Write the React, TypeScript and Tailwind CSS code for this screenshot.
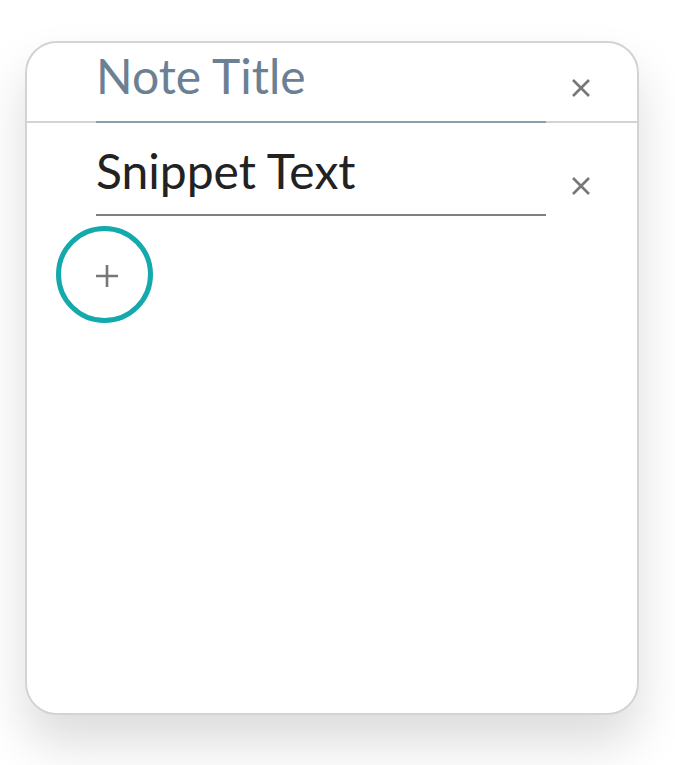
import { useState } from "react";

function CloseIcon() {
  return (
    <svg width="20" height="20" viewBox="0 0 20 20" className="text-[#777]">
      <path d="M2 2 L18 18 M18 2 L2 18" stroke="currentColor" strokeWidth="2.6" />
    </svg>
  );
}

export default function App() {
  const [title] = useState("");
  const [snippets] = useState(["Snippet Text"]);

  return (
    <div className="min-h-[765px] bg-white pl-[25px] pt-[41px] font-['Lato',sans-serif]">
      <div className="w-[614px] h-[674px] rounded-[32px] border-2 border-[#d3d3d3] bg-white shadow-[0_28px_50px_rgba(0,0,0,0.14)] overflow-hidden">
        <div className="flex items-end border-b-2 border-[#d3d3d3] h-[80px]">
          <div className="ml-[69px] w-[450px] h-[80px] border-b-2 border-[#8a9dab] -mb-[2px] flex items-end">
            <span className="text-[48px] leading-none text-[#6b8092] pb-[21px]">
              {title || "Note Title"}
            </span>
          </div>
          <div className="ml-[25px] pb-[23px]">
            <CloseIcon />
          </div>
        </div>

        {snippets.map((s) => (
          <div key={s} className="flex items-end h-[93px]">
            <div className="ml-[69px] w-[450px] h-[84px] border-b-2 border-[#808080] flex items-end">
              <span className="text-[48px] leading-none text-[#222] pb-[19px]">{s}</span>
            </div>
            <div className="ml-[25px] pb-[20px]">
              <CloseIcon />
            </div>
          </div>
        ))}

        <button className="ml-[29px] mt-[10px] w-[97px] h-[97px] rounded-full border-[5px] border-[#14a9ad] flex items-center justify-center">
          <svg width="24" height="24" viewBox="0 0 24 24" className="text-[#777] translate-x-[2px] translate-y-[1px]">
            <path d="M12 1 V23 M1 12 H23" stroke="currentColor" strokeWidth="2.6" />
          </svg>
        </button>
      </div>
    </div>
  );
}
